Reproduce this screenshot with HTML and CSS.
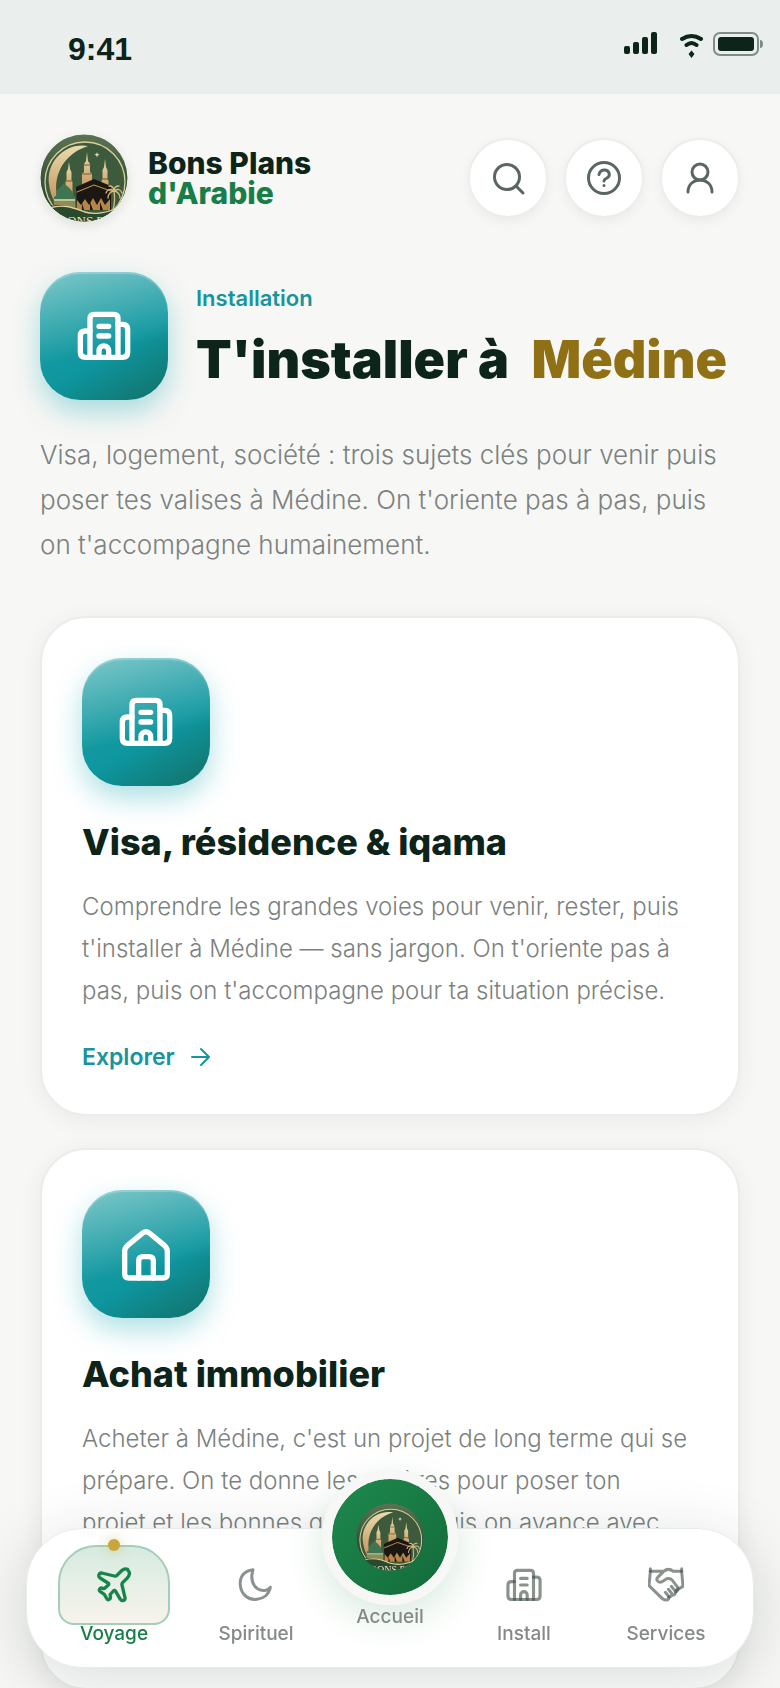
FILE: index.html
```html
<!DOCTYPE html>
<html lang="fr">
<head>
<meta charset="utf-8">
<meta name="viewport" content="width=device-width, initial-scale=1">
<title>Bons Plans d'Arabie – T'installer à Médine</title>
<link rel="stylesheet" href="styles.css">
</head>
<body>
<svg class="sprite" aria-hidden="true">
  <defs>
    <linearGradient id="sky" x1="0" y1="0" x2="0" y2="1"><stop offset="0" stop-color="#5c7352"/><stop offset=".5" stop-color="#38563c"/><stop offset="1" stop-color="#1d3d27"/></linearGradient>
    <linearGradient id="gold" x1="0" y1="0" x2="0" y2="1"><stop offset="0" stop-color="#e9dcae"/><stop offset="1" stop-color="#c08a52"/></linearGradient>
    <clipPath id="round"><circle cx="44" cy="44" r="43.500"/></clipPath>
  </defs>
  <symbol id="logo" viewBox="0 0 88 88">
    <g clip-path="url(#round)">
      <rect width="88" height="88" fill="url(#sky)"/>
      <circle cx="45" cy="48" r="40" fill="#3d5a3c" stroke="#d9cf9c" stroke-width="1.300"/>
      <path d="M48 12C25 8 6 28 9 50c2 15 7 21 14 25C9 56 16 22 48 12z" fill="url(#gold)"/>
      <path d="M57 18l.7 2 2 .7-2 .7-.7 2-.7-2-2-.7 2-.7z" fill="#e9dfb5"/>
      <g fill="url(#gold)">
        <path d="M47 18l1 9 2 3v8l2 2v20H42V40l2-2v-8l2-3z"/>
        <path d="M29 28l1 7 1.500 3v8l1 2v20h-7V48l1-2v-8l1.500-3z"/>
        <path d="M65 25l1 8 1.500 3v9l1 2v15h-7V47l1-2v-9l1.500-3z"/>
      </g>
      <path d="M43 40h8M26 47h6M62 45h6M44 31h6" stroke="#6c5a34" stroke-width="1"/>
      <path d="M14 74c-1-10 0-12 2-12 0-7 5-9 8-13 3 4 9 6 9 13 3 0 3 4 3 12z" fill="#3f7550"/>
      <path d="M14 65h21v2H14z" fill="#c9c08d"/>
      <path d="M14 67h21v8H14z" fill="#8c8b5c"/>
      <path d="M36 53l18-8 17 7v24H37z" fill="#1b1713"/>
      <path d="M37 58l17-7 17 6" fill="none" stroke="#b08a4c" stroke-width="1.300"/>
      <path d="M37 76V66l4 5 4-6 4 6 4-7 4 7 4-7 4 7 5-6v11z" fill="#b98547"/>
      <path d="M42 76v-7l2 7M50 76v-8l3 8M60 76v-8l3 8" fill="#1b1713"/>
      <path d="M73 76c2-7 2-12 1-19M74 57c-4-3-7-1-8 2M74 57c4-3 7-1 8 2M74 57c-3 0-6 3-6 7M74 57c3 0 6 3 6 7M74 57c0-3-2-5-5-5M74 57c0-3 2-5 5-5" fill="none" stroke="#d6bd80" stroke-width="1.300"/>
      <path d="M8 73c14-5 26 1 36 5s24 2 36-5v15H8z" fill="#2a4a2e"/>
      <path d="M10 74c14-5 26 1 35 4s23 1 33-5" fill="none" stroke="#e0cf9a" stroke-width="1.400"/>
      <text x="45" y="91" text-anchor="middle" class="logo-word">BONS PL</text>
    </g>
  </symbol>
  <symbol id="building" viewBox="0 0 168 156">
    <path d="M42 142V26q0-13 13-13h58q13 0 13 13v116"/>
    <path d="M42 63H28q-15 0-15 15v49q0 15 15 15h112q15 0 15-15V58q0-15-15-15h-14"/>
    <path d="M69 49h29M69 78h29"/>
    <path d="M69 142v-20a14.500 14.500 0 0 1 29 0v20"/>
  </symbol>
  <symbol id="house" viewBox="0 0 168 168">
    <path d="M20 76q0-10 8-17l46-38q10-8 20 0l46 38q8 7 8 17v67q0 13-13 13H33q-13 0-13-13z"/>
    <path d="M62 156v-51q0-13 13-13h18q13 0 13 13v51"/>
  </symbol>
</svg>

<div class="app">
  <div class="status">
    <span class="clock">9:41</span>
    <svg class="status-icons" viewBox="0 0 140 28" aria-hidden="true">
      <g fill="#0d2419">
        <rect x="0" y="15" width="6" height="8" rx="2"/><rect x="9" y="11" width="6" height="12" rx="2"/><rect x="18" y="6" width="6" height="17" rx="2"/><rect x="27" y="1" width="6" height="22" rx="2"/>
        <path d="M67.500 19.500l3 3.500-3 4-3-4z"/>
        <rect x="94" y="6" width="36" height="14" rx="3"/>
      </g>
      <path d="M58 8q9.500-6 19 0M62.500 14q5-4 10 0" fill="none" stroke="#0d2419" stroke-width="4"/>
      <rect x="90" y="2" width="44" height="22" rx="6" fill="none" stroke="#7f8c86" stroke-width="2"/>
      <path d="M136 9q3 0 3 4t-3 4z" fill="#7f8c86"/>
    </svg>
  </div>

  <main class="content">
    <header class="topbar">
      <a class="brand" href="#">
        <svg class="brand-logo" aria-hidden="true"><use href="#logo"/></svg>
        <span class="brand-name">Bons Plans<span class="brand-sub">d'Arabie</span></span>
      </a>
      <div class="actions">
        <button class="round-btn" type="button" aria-label="Rechercher"><svg viewBox="0 0 36 36"><circle cx="17" cy="17" r="12.500"/><path d="M26 26l7 7"/></svg></button>
        <button class="round-btn" type="button" aria-label="Aide"><svg viewBox="0 0 36 36"><circle cx="18" cy="18" r="15.500"/><path d="M13 14.500q1-4.500 5.500-4.500c5 0 6.500 6 2.500 8q-3 1.500-3 3M18 25.500v.1"/></svg></button>
        <button class="round-btn" type="button" aria-label="Profil"><svg viewBox="0 0 36 36"><circle cx="18" cy="12" r="8"/><path d="M6 32c0-16 24-16 24 0"/></svg></button>
      </div>
    </header>

    <section class="hero">
      <span class="tile"><svg class="tile-icon"><use href="#building"/></svg></span>
      <div class="hero-text">
        <p class="eyebrow">Installation</p>
        <h1 class="title">T'installer à <span class="place">Médine</span></h1>
      </div>
    </section>
    <p class="lead">Visa, logement, société : trois sujets clés pour venir puis poser tes valises à Médine. On t'oriente pas à pas, puis on t'accompagne humainement.</p>

    <div class="cards">
      <article class="card">
        <span class="tile"><svg class="tile-icon"><use href="#building"/></svg></span>
        <h2 class="card-title">Visa, résidence &amp; iqama</h2>
        <p class="card-text">Comprendre les grandes voies pour venir, rester, puis t'installer à Médine — sans jargon. On t'oriente pas à pas, puis on t'accompagne pour ta situation précise.</p>
        <a class="more" href="#">Explorer <svg viewBox="0 0 20 20"><path d="M1 10h17M10 2l8 8-8 8"/></svg></a>
      </article>
      <article class="card">
        <span class="tile"><svg class="tile-icon"><use href="#house"/></svg></span>
        <h2 class="card-title">Achat immobilier</h2>
        <p class="card-text">Acheter à Médine, c'est un projet de long terme qui se prépare. On te donne les repères pour poser ton projet&nbsp;et les bonnes questions, puis on avance avec méthode.</p>
        <a class="more" href="#">Explorer <svg viewBox="0 0 20 20"><path d="M1 10h17M10 2l8 8-8 8"/></svg></a>
      </article>
    </div>
  </main>

  <nav class="tabs" aria-label="Navigation principale">
    <a class="tab active" href="#"><span class="pill"><svg class="tab-icon" viewBox="0 0 108 108"><path d="M95 7c-9-4-17 2-22 8L62 26c-2 2-4 2-7 1L17 18c-8-1-12 10-5 15l24 15c3 2 3 4 1 6l-10 9c-2 2-4 2-7 1-7-3-13 4-8 9l13 9 8 14c5 5 12 0 10-8-1-3-1-5 1-7l8-9c3-3 5-2 7 1l14 24c5 7 16 3 14-5l-9-38c-1-3 0-5 2-7l12-12c8-7 12-19 4-24z"/></svg></span><span class="tab-label">Voyage</span></a>
    <a class="tab" href="#"><span class="pill"><svg class="tab-icon" viewBox="0 0 108 108"><path d="M45 8C18 11 4 30 7 56c3 27 24 44 50 41 20-2 36-15 40-36-8 11-24 13-38 4C43 55 37 33 45 8z"/></svg></span><span class="tab-label">Spirituel</span></a>
    <a class="tab home" href="#"><span class="home-disc"><svg class="home-logo" aria-hidden="true"><use href="#logo"/></svg></span><span class="tab-label">Accueil</span></a>
    <a class="tab" href="#"><span class="pill"><svg class="tab-icon wide"><use href="#building"/></svg></span><span class="tab-label">Install</span></a>
    <a class="tab" href="#"><span class="pill"><svg class="tab-icon" viewBox="0 0 108 108"><path d="M7 5v9L3 56l33 32q11 13 21 11 8-2 5-11l-10-12"/><path d="M101 5v9l4 44-19 11"/><path d="M7 13h40M101 13H76q-15-12-29 0L29 31c-7 9 4 18 13 13l14-9q10-3 17 5l14 18q7 11-3 17"/><path d="M62 90q11 0 9-11L61 67M73 85q13-3 8-14L70 58"/></svg></span><span class="tab-label">Services</span></a>
  </nav>
</div>
</body>
</html>
```
FILE: styles.css
```css
:root {
  --ink: #0c2419;
  --paper: #f7f7f5;
  --teal: #17959c;
  --green: #187d46;
  --muted: #858a87;
  --copy: #7b817e;
}
* { box-sizing: border-box; }
body {
  margin: 0;
  background: var(--paper);
  color: var(--ink);
  font-family: Inter, "Liberation Sans", sans-serif;
}
h1, h2, p { margin: 0; }
a { color: inherit; text-decoration: none; }
svg { display: block; fill: none; stroke-linecap: round; stroke-linejoin: round; }
.sprite { position: absolute; width: 0; height: 0; }
.logo-word { font: 13px "Liberation Serif", serif; fill: #e6e0c8; }

.app { height: 100vh; display: flex; flex-direction: column; }
.status {
  flex: none;
  height: 94px;
  padding: 4px 16px 0 68px;
  display: flex;
  align-items: center;
  justify-content: space-between;
  background: #eaefee;
}
.clock { font: bold 32px/40px "Liberation Sans", sans-serif; }
.status-icons { width: 140px; height: 28px; margin-bottom: 8px; }

.content {
  flex: 1;
  min-height: 0;
  padding: 40px 40px 0;
  overflow-y: auto;
  scrollbar-width: none;
}
.topbar { display: flex; align-items: center; justify-content: space-between; }
.brand { display: flex; align-items: center; gap: 20px; }
.brand-logo { width: 88px; height: 88px; border-radius: 50%; box-shadow: 0 4px 12px rgba(12, 36, 25, .1); }
.brand-name { font-weight: 800; font-size: 30px; line-height: 30px; }
.brand-sub { display: block; color: var(--green); }
.actions { display: flex; gap: 16px; }
.round-btn {
  width: 80px;
  height: 80px;
  padding: 0;
  display: grid;
  place-items: center;
  border: 2px solid #ededeb;
  border-radius: 50%;
  background: #fff;
  box-shadow: 0 4px 12px rgba(12, 36, 25, .05);
}
.round-btn svg { width: 36px; height: 36px; stroke: #5a6661; stroke-width: 3; }

.hero { display: flex; gap: 28px; margin-top: 50px; }
.tile {
  flex: none;
  width: 128px;
  height: 128px;
  display: grid;
  place-items: center;
  border-radius: 40px;
  background:
    linear-gradient(168deg, rgba(255, 255, 255, .4), rgba(255, 255, 255, 0) 60%),
    linear-gradient(150deg, #22a0a4 10%, #0e969f 60%, #12756f 95%);
  box-shadow: inset 0 2px 1px rgba(255, 255, 255, .25), 0 12px 28px rgba(14, 165, 175, .34);
}
.tile-icon { width: 56px; height: 56px; stroke: #fff; stroke-width: 16; }
.hero-text { padding-top: 10px; }
.eyebrow { color: var(--teal); font-weight: 600; font-size: 22px; line-height: 32px; }
.title { margin-top: 14px; font-weight: 900; font-size: 52px; line-height: 64px; white-space: nowrap; }
.place { margin-left: 12px; color: #8f7015; }
.lead { margin-top: 32px; color: var(--copy); font-weight: 300; font-size: 26px; line-height: 45px; }

.cards { display: grid; gap: 32px; margin-top: 49px; }
.card {
  padding: 40px;
  border: 2px solid #ececea;
  border-radius: 46px;
  background: #fff;
  box-shadow: 0 4px 24px rgba(12, 36, 25, .06);
}
.card-title { margin-top: 32px; font-weight: 800; font-size: 36px; line-height: 48px; }
.card-text { margin-top: 20px; color: var(--copy); font-weight: 300; font-size: 24px; line-height: 42px; }
.more { display: flex; align-items: center; gap: 16px; margin-top: 28px; color: var(--teal); font-weight: 600; font-size: 23px; line-height: 34px; }
.more svg { width: 20px; height: 20px; stroke: currentColor; stroke-width: 2; }

.tabs {
  position: fixed;
  left: 26px;
  right: 26px;
  bottom: 20px;
  height: 140px;
  padding: 16px;
  display: grid;
  grid-template-columns: 1fr 1fr 126px 1fr 1fr;
  border: 1px solid #e9ebea;
  border-radius: 56px;
  background: #fefffe;
  box-shadow: 0 12px 64px rgba(12, 36, 25, .16);
}
.tab { display: flex; flex-direction: column; align-items: center; color: var(--muted); }
.pill { position: relative; width: 112px; height: 80px; margin-bottom: -3px; display: grid; place-items: center; border: 2px solid transparent; border-radius: 38px 38px 16px 16px; }
.tab-icon { width: 36px; height: 36px; stroke: rgba(60, 74, 67, .6); stroke-width: 9; }
.tab-icon.wide { width: 38px; stroke-width: 14; }
.tab-label { position: relative; font-weight: 500; font-size: 19px; line-height: 24px; }
.active { color: var(--green); }
.active .pill { border-color: #a3cfb8; background: linear-gradient(#d7ebe0, #f7f3ec); }
.active .pill::before {
  content: "";
  position: absolute;
  top: -8px;
  left: 48px;
  width: 12px;
  height: 12px;
  border-radius: 50%;
  background: #c9a53c;
  box-shadow: 0 0 12px rgba(201, 165, 60, .5);
}
.active .tab-icon { stroke: #17854a; stroke-width: 10; }
.home-disc {
  flex: none;
  width: 136px;
  height: 136px;
  margin-top: -76px;
  display: grid;
  place-items: center;
  border: 10px solid var(--paper);
  border-radius: 50%;
  background: linear-gradient(135deg, #1d8a4e, #136a3a) padding-box;
  box-shadow: 0 12px 36px rgba(24, 125, 70, .16);
}
.home-logo { width: 68px; height: 68px; }
```
